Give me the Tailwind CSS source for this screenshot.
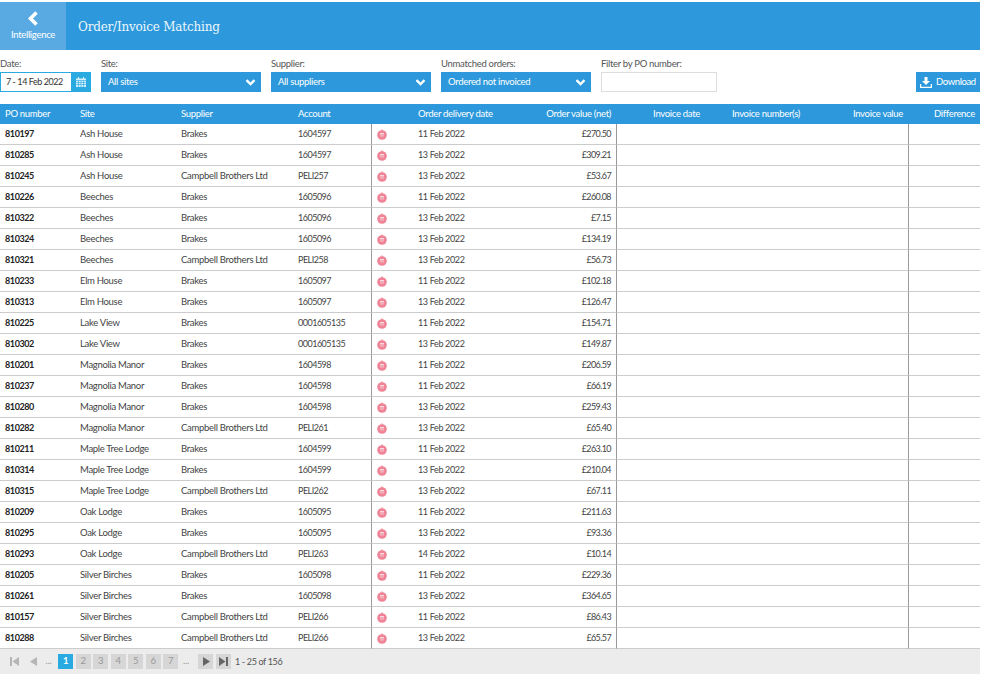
<!DOCTYPE html>
<html lang="en">
<head>
    <meta charset="UTF-8">
    <title>Order/Invoice Matching</title>
    <script src="https://cdn.jsdelivr.net/npm/@tailwindcss/browser@4"></script>
</head>
<body class="bg-white font-['Lato',sans-serif] text-[9.5px] tracking-[-0.3px] whitespace-nowrap text-[#444]">
    <div class="w-[980px] pt-[2px]">
        <!-- Header -->
        <div class="flex h-[48px] items-stretch bg-[#2d99dc] text-white">
            <a class="flex w-[66px] flex-col items-center justify-center bg-[#59aae3] pt-[1px]">
                <svg width="14" height="15" viewBox="0 0 14 15"><path d="M10.500 1.500 L4.500 7.500 L10.500 13.500" fill="none" stroke="white" stroke-width="3.600"/></svg>
                <span class="mt-[2px] leading-[14px]">Intelligence</span>
            </a>
            <h1 class="ml-[12px] self-center pt-[2px] font-['DejaVu_Serif',serif] text-[12px] font-medium tracking-[-0.2px] text-[#eef7fc]">Order/Invoice Matching</h1>
        </div>

        <!-- Filters -->
        <div class="flex h-[54px] items-start pt-[8px] text-[#555]">
            <div class="w-[101px]">
                <label class="block h-[14px] leading-[12px]">Date:</label>
                <div class="flex h-[20px] w-[91px] bg-[#29abe2]">
                    <div class="m-[1px] flex w-[70px] items-center bg-white pl-[5px] text-[9px] tracking-[-0.45px] text-[#333]">7 - 14 Feb 2022</div>
                    <svg class="mt-[5px] ml-[4px]" width="10" height="10" viewBox="0 0 10 10"><path d="M0 1.500h10V10H0z" fill="#d5eef9"/><path d="M0 3.500h10M0 5.500h10M0 7.500h10M2.500 3.500V10M5 3.500V10M7.500 3.500V10" stroke="#29abe2" stroke-width=".6"/><path d="M2.500 0v2M7.500 0v2" stroke="#d5eef9" stroke-width="1.200"/></svg>
                </div>
            </div>
            <div class="mr-[10px] w-[160px]">
                <label class="block h-[14px] leading-[12px]">Site:</label>
                <div class="flex h-[20px] items-center justify-between bg-[#2d99dc] pr-[5px] pl-[7px] text-white">All sites
                    <svg width="11" height="7" viewBox="0 0 11 7"><path d="M1.500 1.200 L5.500 5 L9.500 1.200" fill="none" stroke="white" stroke-width="2.400"/></svg>
                </div>
            </div>
            <div class="mr-[10px] w-[160px]">
                <label class="block h-[14px] leading-[12px]">Supplier:</label>
                <div class="flex h-[20px] items-center justify-between bg-[#2d99dc] pr-[5px] pl-[7px] text-white">All suppliers
                    <svg width="11" height="7" viewBox="0 0 11 7"><path d="M1.500 1.200 L5.500 5 L9.500 1.200" fill="none" stroke="white" stroke-width="2.400"/></svg>
                </div>
            </div>
            <div class="mr-[10px] w-[150px]">
                <label class="block h-[14px] leading-[12px]">Unmatched orders:</label>
                <div class="flex h-[20px] items-center justify-between bg-[#2d99dc] pr-[5px] pl-[7px] text-white">Ordered not invoiced
                    <svg width="11" height="7" viewBox="0 0 11 7"><path d="M1.500 1.200 L5.500 5 L9.500 1.200" fill="none" stroke="white" stroke-width="2.400"/></svg>
                </div>
            </div>
            <div class="w-[116px]">
                <label class="block h-[14px] leading-[12px]">Filter by PO number:</label>
                <input type="text" class="block h-[20px] w-[116px] border border-[#ddd] bg-white">
            </div>
            <button class="mt-[14px] ml-auto flex h-[20px] w-[64px] items-center gap-[4px] bg-[#2d99dc] pl-[4px] tracking-[-0.4px] text-white">
                <svg width="12" height="11" viewBox="0 0 12 11"><path d="M4.500 0h3v4H10L6 8 2 4h2.500z" fill="white"/><path d="M.6 7v3.400h10.800V7" fill="none" stroke="white" stroke-width="1.200"/></svg>
                Download
            </button>
        </div>

        <!-- Table -->
        <table class="w-[980px] table-fixed border-separate border-spacing-0">
            <colgroup>
                <col class="w-[75px]"><col class="w-[101px]"><col class="w-[117px]"><col class="w-[78px]"><col class="w-[42px]"><col class="w-[90px]"><col class="w-[114px]"><col class="w-[88px]"><col class="w-[100px]"><col class="w-[104px]"><col class="w-[71px]">
            </colgroup>
            <thead>
                <tr class="h-[20px] bg-[#2d99dc] text-left text-white">
                    <th class="pl-[5px] font-normal">PO number</th>
                    <th class="pl-[5px] font-normal">Site</th>
                    <th class="pl-[5px] font-normal">Supplier</th>
                    <th class="pl-[5px] font-normal">Account</th>
                    <th></th>
                    <th class="pl-[5px] font-normal">Order delivery date</th>
                    <th class="pr-[6px] text-right font-normal">Order value (net)</th>
                    <th class="pr-[5px] text-right font-normal">Invoice date</th>
                    <th class="pr-[5px] text-right font-normal">Invoice number(s)</th>
                    <th class="pr-[6px] text-right font-normal">Invoice value</th>
                    <th class="pr-[5px] text-right font-normal">Difference</th>
                </tr>
            </thead>
            <tbody id="rows"></tbody>
        </table>

        <!-- Pager -->
        <div class="flex h-[25px] items-center gap-[2.5px] bg-[#ececec] pl-[10px] text-[#555]">
            <svg class="mr-[7.5px]" width="9" height="9" viewBox="0 0 9 9" fill="#b5b5b5"><path d="M0 0h2v9H0zM9 0v9L2.500 4.500z"/></svg>
            <svg class="mr-[6px]" width="8" height="9" viewBox="0 0 8 9" fill="#b5b5b5"><path d="M8 0v9L1 4.500z"/></svg>
            <span class="w-[10px] text-[#999]">...</span>
            <span class="flex h-[15px] w-[15px] items-center justify-center bg-[#29abe2] font-bold text-white">1</span>
            <span class="flex h-[15px] w-[15px] items-center justify-center bg-[#d6d6d6] text-[#999]">2</span>
            <span class="flex h-[15px] w-[15px] items-center justify-center bg-[#d6d6d6] text-[#999]">3</span>
            <span class="flex h-[15px] w-[15px] items-center justify-center bg-[#d6d6d6] text-[#999]">4</span>
            <span class="flex h-[15px] w-[15px] items-center justify-center bg-[#d6d6d6] text-[#999]">5</span>
            <span class="flex h-[15px] w-[15px] items-center justify-center bg-[#d6d6d6] text-[#999]">6</span>
            <span class="flex h-[15px] w-[15px] items-center justify-center bg-[#d6d6d6] text-[#999]">7</span>
            <span class="mx-[2.500px] w-[10px] text-[#999]">...</span>
            <span class="flex h-[15px] w-[15px] items-center justify-center bg-[#d6d6d6]"><svg width="8" height="9" viewBox="0 0 8 9" fill="#666"><path d="M1 0v9l7-4.500z"/></svg></span>
            <span class="flex h-[15px] w-[15px] items-center justify-center bg-[#d6d6d6]"><svg width="9" height="9" viewBox="0 0 9 9" fill="#666"><path d="M0 0v9l6.500-4.500zM7 0h2v9H7z"/></svg></span>
            <span class="ml-[2px] text-[9px] tracking-[-0.35px]">1 - 25 of 156</span>
        </div>
    </div>

    <script>
    const orders = [
        ['810197', 'Ash House', 'Brakes', '1604597', '11 Feb 2022', '£270.50'],
        ['810285', 'Ash House', 'Brakes', '1604597', '13 Feb 2022', '£309.21'],
        ['810245', 'Ash House', 'Campbell Brothers Ltd', 'PELI257', '13 Feb 2022', '£53.67'],
        ['810226', 'Beeches', 'Brakes', '1605096', '11 Feb 2022', '£260.08'],
        ['810322', 'Beeches', 'Brakes', '1605096', '13 Feb 2022', '£7.15'],
        ['810324', 'Beeches', 'Brakes', '1605096', '13 Feb 2022', '£134.19'],
        ['810321', 'Beeches', 'Campbell Brothers Ltd', 'PELI258', '13 Feb 2022', '£56.73'],
        ['810233', 'Elm House', 'Brakes', '1605097', '11 Feb 2022', '£102.18'],
        ['810313', 'Elm House', 'Brakes', '1605097', '13 Feb 2022', '£126.47'],
        ['810225', 'Lake View', 'Brakes', '0001605135', '11 Feb 2022', '£154.71'],
        ['810302', 'Lake View', 'Brakes', '0001605135', '13 Feb 2022', '£149.87'],
        ['810201', 'Magnolia Manor', 'Brakes', '1604598', '11 Feb 2022', '£206.59'],
        ['810237', 'Magnolia Manor', 'Brakes', '1604598', '11 Feb 2022', '£66.19'],
        ['810280', 'Magnolia Manor', 'Brakes', '1604598', '13 Feb 2022', '£259.43'],
        ['810282', 'Magnolia Manor', 'Campbell Brothers Ltd', 'PELI261', '13 Feb 2022', '£65.40'],
        ['810211', 'Maple Tree Lodge', 'Brakes', '1604599', '11 Feb 2022', '£263.10'],
        ['810314', 'Maple Tree Lodge', 'Brakes', '1604599', '13 Feb 2022', '£210.04'],
        ['810315', 'Maple Tree Lodge', 'Campbell Brothers Ltd', 'PELI262', '13 Feb 2022', '£67.11'],
        ['810209', 'Oak Lodge', 'Brakes', '1605095', '11 Feb 2022', '£211.63'],
        ['810295', 'Oak Lodge', 'Brakes', '1605095', '13 Feb 2022', '£93.36'],
        ['810293', 'Oak Lodge', 'Campbell Brothers Ltd', 'PELI263', '14 Feb 2022', '£10.14'],
        ['810205', 'Silver Birches', 'Brakes', '1605098', '11 Feb 2022', '£229.36'],
        ['810261', 'Silver Birches', 'Brakes', '1605098', '13 Feb 2022', '£364.65'],
        ['810157', 'Silver Birches', 'Campbell Brothers Ltd', 'PELI266', '11 Feb 2022', '£86.43'],
        ['810288', 'Silver Birches', 'Campbell Brothers Ltd', 'PELI266', '13 Feb 2022', '£65.57'],
    ];

    const icon = `<svg class="block" width="10" height="11" viewBox="0 0 10 11"><path d="M5 0.200l1.200 1.200H3.800z" fill="#e96b7c"/><circle cx="5" cy="6" r="4.800" fill="#ee8496"/><path d="M3 4.500h4M4 4.500v3.200M6 4.500v3.200" stroke="#fde8ec" stroke-width=".8"/></svg>`;

    document.getElementById('rows').innerHTML = orders.map(o => `
        <tr class="h-[21px]">
            <td class="border-b border-[#ccc] pl-[5px] text-[9px] font-bold tracking-[-0.4px] text-[#222]">${o[0]}</td>
            <td class="border-b border-[#ccc] pl-[5px]">${o[1]}</td>
            <td class="border-b border-[#ccc] pl-[5px]">${o[2]}</td>
            <td class="border-b border-[#ccc] pl-[5px] text-[9px] tracking-[-0.5px]">${o[3]}</td>
            <td class="border-b border-l border-[#ccc] border-l-[#999] pl-[5px]">${icon}</td>
            <td class="border-b border-[#ccc] pl-[5px] text-[9px] tracking-[-0.35px]">${o[4]}</td>
            <td class="border-r border-b border-[#ccc] border-r-[#999] pr-[5px] text-right text-[9px] tracking-[-0.6px]">${o[5]}</td>
            <td class="border-b border-[#ccc]"></td>
            <td class="border-b border-[#ccc]"></td>
            <td class="border-r border-b border-[#ccc] border-r-[#999]"></td>
            <td class="border-b border-[#ccc]"></td>
        </tr>`).join('');
    </script>
</body>
</html>
